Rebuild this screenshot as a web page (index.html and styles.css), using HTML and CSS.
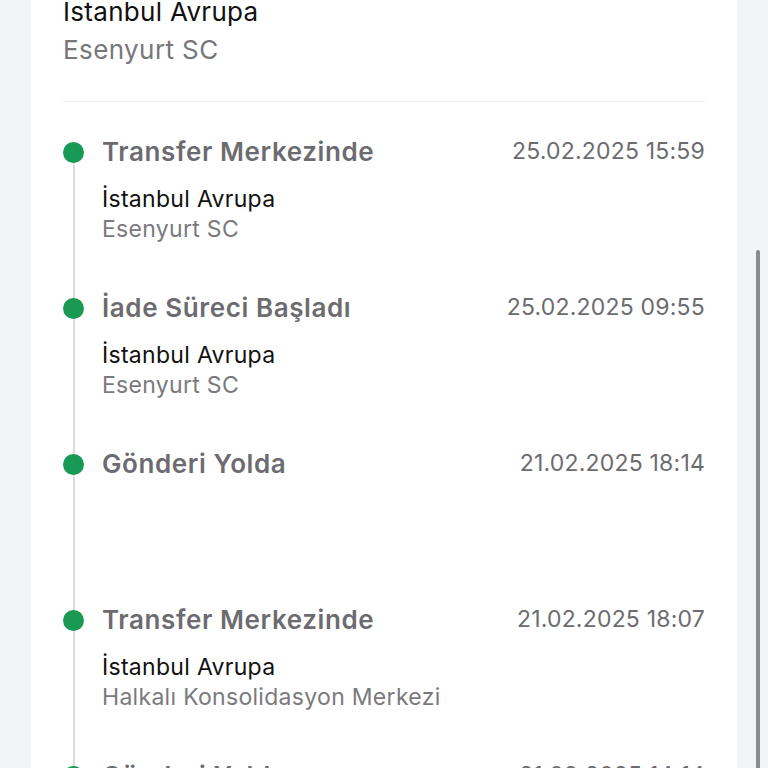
FILE: index.html
```html
<!DOCTYPE html>
<html lang="tr">
<head>
    <meta charset="UTF-8">
    <meta name="viewport" content="width=device-width, initial-scale=1.0">
    <title>Gönderi Takibi</title>
    <link rel="stylesheet" href="styles.css">
</head>
<body>
    <div class="page">
        <div class="tracking-card">
            <div class="current-location">
                <p class="loc-city">İstanbul Avrupa</p>
                <p class="loc-branch">Esenyurt SC</p>
            </div>

            <ul class="timeline">
                <li class="timeline-item">
                    <div class="item-head">
                        <span class="item-title">Transfer Merkezinde</span>
                        <span class="item-date">25.02.2025 15:59</span>
                    </div>
                    <p class="item-city">İstanbul Avrupa</p>
                    <p class="item-branch">Esenyurt SC</p>
                </li>
                <li class="timeline-item">
                    <div class="item-head">
                        <span class="item-title">İade Süreci Başladı</span>
                        <span class="item-date">25.02.2025 09:55</span>
                    </div>
                    <p class="item-city">İstanbul Avrupa</p>
                    <p class="item-branch">Esenyurt SC</p>
                </li>
                <li class="timeline-item">
                    <div class="item-head">
                        <span class="item-title">Gönderi Yolda</span>
                        <span class="item-date">21.02.2025 18:14</span>
                    </div>
                </li>
                <li class="timeline-item">
                    <div class="item-head">
                        <span class="item-title">Transfer Merkezinde</span>
                        <span class="item-date">21.02.2025 18:07</span>
                    </div>
                    <p class="item-city">İstanbul Avrupa</p>
                    <p class="item-branch">Halkalı Konsolidasyon Merkezi</p>
                </li>
                <li class="timeline-item">
                    <div class="item-head">
                        <span class="item-title">Gönderi Yolda</span>
                        <span class="item-date">21.02.2025 14:14</span>
                    </div>
                </li>
            </ul>
        </div>

        <div class="scroll-track">
            <div class="scroll-thumb"></div>
        </div>
    </div>
</body>
</html>
```

FILE: styles.css
```css
* {
    margin: 0;
    padding: 0;
    box-sizing: border-box;
}

html, body {
    height: 100%;
    overflow: hidden;
}

body {
    font-family: 'Inter', 'Roboto', sans-serif;
    background: #f2f3f5;
    color: #111;
}

.page {
    display: flex;
    height: 100%;
    padding-left: 31px;
}

.tracking-card {
    background: #fff;
    width: 706px;
    margin-top: -40px;
    padding: 0 32px;
    flex-shrink: 0;
}

.current-location {
    padding-top: 33px;
    padding-bottom: 32px;
    border-bottom: 1px solid #ededef;
}

.loc-city {
    font-size: 26px;
    line-height: 38px;
    letter-spacing: 0.3px;
    color: #111;
}

.loc-branch {
    font-size: 26px;
    line-height: 38px;
    letter-spacing: 0.4px;
    color: #77777b;
}

.timeline {
    list-style: none;
    padding-top: 34px;
}

.timeline-item {
    position: relative;
    min-height: 156px;
    padding-left: 39px;
}

/* dot */
.timeline-item:before {
    content: "";
    position: absolute;
    left: 0;
    top: 6px;
    width: 21px;
    height: 21px;
    border-radius: 50%;
    background: #189a55;
    z-index: 1;
}

/* connector */
.timeline-item:after {
    content: "";
    position: absolute;
    left: 10px;
    top: 17px;
    bottom: -17px;
    width: 1.5px;
    background: #dcdcde;
}

.item-head {
    display: flex;
    justify-content: space-between;
    align-items: center;
    height: 30px;
    margin-bottom: 18px;
}

.item-title {
    font-size: 26px;
    font-weight: 600;
    letter-spacing: 0.6px;
    color: #6c6c70;
}

.item-date {
    font-size: 23px;
    letter-spacing: 0.2px;
    color: #6c6c70;
}

.item-city {
    font-size: 23px;
    line-height: 30px;
    letter-spacing: 0.3px;
    color: #111;
}

.item-branch {
    font-size: 23px;
    line-height: 30px;
    letter-spacing: 0.3px;
    color: #7a7a7e;
}

.scroll-track {
    flex: 1;
    position: relative;
}

.scroll-thumb {
    position: absolute;
    left: 19px;
    top: 250px;
    bottom: -20px;
    width: 4px;
    border-radius: 2px;
    background: #8a8a8c;
}
```
